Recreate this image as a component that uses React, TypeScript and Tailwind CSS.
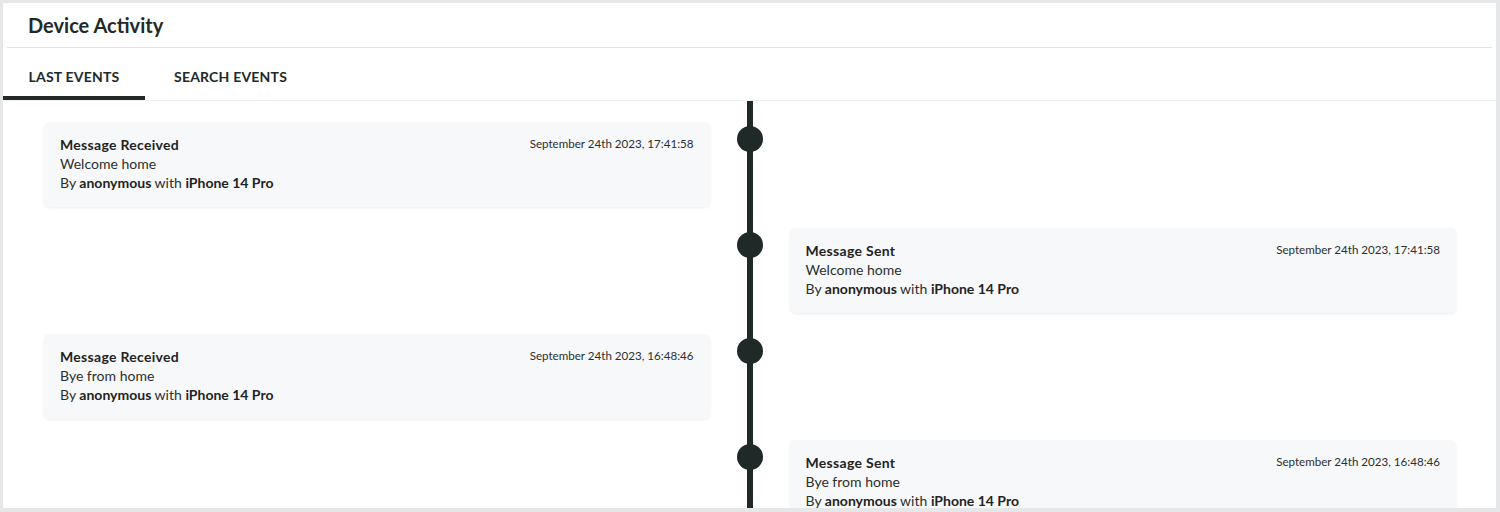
import React from "react"

type DeviceEvent = {
  title: string
  message: string
  user: string
  device: string
  time: string
}

const EVENTS: DeviceEvent[] = [
  { title: "Message Received", message: "Welcome home", user: "anonymous", device: "iPhone 14 Pro", time: "September 24th 2023, 17:41:58" },
  { title: "Message Sent", message: "Welcome home", user: "anonymous", device: "iPhone 14 Pro", time: "September 24th 2023, 17:41:58" },
  { title: "Message Received", message: "Bye from home", user: "anonymous", device: "iPhone 14 Pro", time: "September 24th 2023, 16:48:46" },
  { title: "Message Sent", message: "Bye from home", user: "anonymous", device: "iPhone 14 Pro", time: "September 24th 2023, 16:48:46" },
]

function EventCard({ event }: { event: DeviceEvent }) {
  return (
    <div className="bg-[#f7f8fa] rounded-md shadow-[0_1px_3px_rgba(0,0,0,0.07)] px-4 pt-[13px] pb-[15px] text-[14px] leading-[19px] text-[#2b2f2e]">
      <div className="flex items-start justify-between">
        <span className="font-bold tracking-[0.3px] text-[#1f2423]">{event.title}</span>
        <span className="pt-[1px] text-[11.6px] leading-[16px] text-[#2b2f2e]">{event.time}</span>
      </div>
      <div>{event.message}</div>
      <div>
        By <span className="font-bold text-[#1f2423]">{event.user}</span> with{" "}
        <span className="font-bold text-[#1f2423]">{event.device}</span>
      </div>
    </div>
  )
}

export default function App() {
  return (
    <div
      className="h-[512px] overflow-hidden bg-[#e6e7e9] pt-[3px] pl-[3px] pr-[4px]"
      style={{ fontFamily: "Lato, 'Noto Sans', sans-serif" }}
    >
      <div className="h-[505px] overflow-hidden bg-white">
        <div className="mx-[4px] h-[45px] border-b border-[#e4e5e7] pl-[21px] flex items-center">
          <h1 className="text-[20px] font-bold text-[#222a28]">Device Activity</h1>
        </div>
        <div className="flex h-[53px] border-b border-[#f0f1f2]">
          <div className="relative w-[142px] flex justify-center pt-[20px] text-[14px] leading-[17px] tracking-[0.2px] font-bold text-[#222a28]">
            LAST EVENTS
            <div className="absolute bottom-0 left-0 right-0 h-[4px] bg-[#222a28]" />
          </div>
          <div className="pl-[29px] pt-[20px] text-[14px] leading-[17px] tracking-[0.2px] font-bold text-[#222a28]">
            SEARCH EVENTS
          </div>
        </div>
        <div>
          {EVENTS.map((event, i) => (
            <div key={i} className="grid grid-cols-[1fr_80px_1fr]">
              <div className="pl-[41px] pt-[21px]">
                {i % 2 === 0 && <EventCard event={event} />}
              </div>
              <div className="relative flex justify-center">
                <div className="w-[6px] bg-[#1f2927]" />
                <div className="absolute top-[25px] w-[26px] h-[26px] rounded-full bg-[#1f2927]" />
              </div>
              <div className="pr-[40px] pt-[21px]">
                {i % 2 === 1 && <EventCard event={event} />}
              </div>
            </div>
          ))}
        </div>
      </div>
    </div>
  )
}
